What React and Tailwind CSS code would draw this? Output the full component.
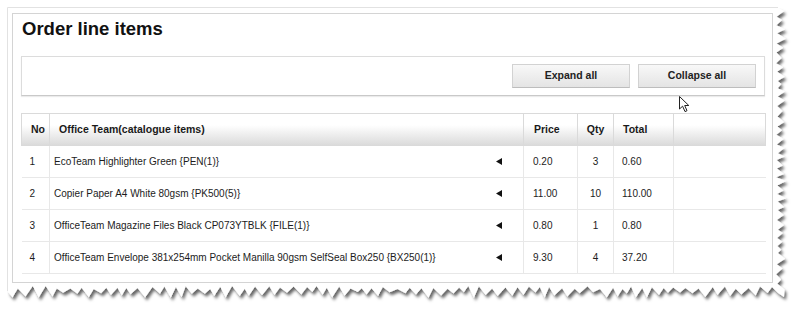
const rows = [
  { no: 1, desc: "EcoTeam Highlighter Green {PEN(1)}", price: "0.20", qty: 3, total: "0.60" },
  { no: 2, desc: "Copier Paper A4 White 80gsm {PK500(5)}", price: "11.00", qty: 10, total: "110.00" },
  { no: 3, desc: "OfficeTeam Magazine Files Black CP073YTBLK {FILE(1)}", price: "0.80", qty: 1, total: "0.80" },
  {
    no: 4,
    desc: "OfficeTeam Envelope 381x254mm Pocket Manilla 90gsm SelfSeal Box250 {BX250(1)}",
    price: "9.30",
    qty: 4,
    total: "37.20",
  },
];

// jagged "torn paper" outline for the screenshot frame
function tornPath() {
  let seed = 11;
  const rnd = () => {
    seed = (seed * 9301 + 49297) % 233280;
    return seed / 233280;
  };
  const pts = [
    [8, 8],
    [778, 8],
  ];
  let i = 0;
  for (let y = 11; y < 292; y += 3 + rnd() * 3, i++) {
    pts.push([i % 2 ? 776 + rnd() * 2 : 781 + rnd() * 5, y]);
  }
  pts.push([784, 297]);
  i = 0;
  for (let x = 778; x > 10; x -= 4 + rnd() * 4, i++) {
    pts.push([x, i % 2 ? 286 + rnd() * 3 : 292 + rnd() * 6]);
  }
  pts.push([8, 292]);
  return "M" + pts.map(([x, y]) => `${x.toFixed(1)},${y.toFixed(1)}`).join(" L") + " Z";
}

function PaperFrame() {
  return (
    <svg className="absolute inset-0" width="799" height="317" viewBox="0 0 799 317">
      <defs>
        <filter id="tornShadow" x="-5%" y="-5%" width="110%" height="115%">
          <feDropShadow dx="2" dy="3" stdDeviation="1.7" floodColor="#000" floodOpacity="0.6" />
        </filter>
      </defs>
      <path d={tornPath()} fill="#fff" filter="url(#tornShadow)" />
      <path d="M7.5,291 V7.5 H778" fill="none" stroke="#e2e2e2" />
    </svg>
  );
}

function Cursor() {
  return (
    <svg className="absolute left-[679px] top-[96px]" width="13" height="17" viewBox="0 0 13 17">
      <path
        d="M0.5,0.5 L0.5,13 L3.6,10.2 L6,15.6 L8,14.7 L5.7,9.5 L9.8,9.5 Z"
        fill="#fff"
        stroke="#222"
        strokeWidth="1"
        strokeLinejoin="round"
      />
    </svg>
  );
}

function ToolButton({ children }) {
  return (
    <button
      type="button"
      className="h-[24px] w-[118px] border border-[#d2d2d2] border-b-[#bdbdbd] bg-gradient-to-b from-[#f8f8f8] to-[#e4e4e4] text-[10.5px] font-bold text-[#222]"
    >
      {children}
    </button>
  );
}

function LeftArrow() {
  return (
    <svg width="6" height="7" viewBox="0 0 6 7">
      <path d="M0,3.5 L6,0 L6,7 Z" fill="#111" />
    </svg>
  );
}

export default function App() {
  return (
    <div className="relative h-[317px] w-[799px] overflow-hidden bg-white font-['Liberation_Sans',Arial,sans-serif] text-[#1c1c1c]">
      <PaperFrame />

      <div className="relative pl-[12px] pt-[13px]">
        <div className="h-[270px] w-[761px] border border-[#d4d4d4] bg-white pl-[8px] pr-[7px] pt-[3px]">
          <h1 className="pl-[1px] text-[18.5px] font-bold leading-[24px] text-[#111]">Order line items</h1>

          <div className="mt-[15px] flex h-[40px] items-start justify-end gap-[8px] border border-[#dcdcdc] border-b-[#c9c9c9] pr-[8px] pt-[7px] shadow-[0_1px_1px_rgba(0,0,0,0.08)]">
            <ToolButton>Expand all</ToolButton>
            <ToolButton>Collapse all</ToolButton>
          </div>

          <table className="mt-[17px] w-[744px] table-fixed border-collapse text-left">
            <colgroup>
              <col className="w-[28px]" />
              <col className="w-[474px]" />
              <col className="w-[54px]" />
              <col className="w-[36px]" />
              <col className="w-[60px]" />
              <col className="w-[92px]" />
            </colgroup>
            <thead>
              <tr className="h-[32px] bg-gradient-to-b from-white from-35% to-[#d9d9d9] text-[10.5px] font-bold text-[#1a1a1a]">
                <th className="border border-[#dadada] pl-[9px] font-bold">No</th>
                <th className="border border-[#dadada] pl-[9px] font-bold">Office Team(catalogue items)</th>
                <th className="border border-[#dadada] pl-[10px] font-bold">Price</th>
                <th className="border border-[#dadada] text-center font-bold">Qty</th>
                <th className="border border-[#dadada] pl-[9px] font-bold">Total</th>
                <th className="border border-[#dadada] font-bold" />
              </tr>
            </thead>
            <tbody className="text-[10px]">
              {rows.map((row) => (
                <tr key={row.no} className="h-[32px] border-b border-[#e8e8e8]">
                  <td className="pl-[8px]">{row.no}</td>
                  <td className="border-l border-[#e8e8e8] pl-[4px]">
                    <div className="flex items-center justify-between pr-[21px]">
                      <span>{row.desc}</span>
                      <LeftArrow />
                    </div>
                  </td>
                  <td className="border-l border-[#e8e8e8] pl-[9px]">{row.price}</td>
                  <td className="border-l border-[#e8e8e8] text-center">{row.qty}</td>
                  <td className="border-l border-[#e8e8e8] pl-[8px]">{row.total}</td>
                  <td className="border-l border-[#e8e8e8]" />
                </tr>
              ))}
            </tbody>
          </table>
        </div>
      </div>

      <Cursor />
    </div>
  );
}
